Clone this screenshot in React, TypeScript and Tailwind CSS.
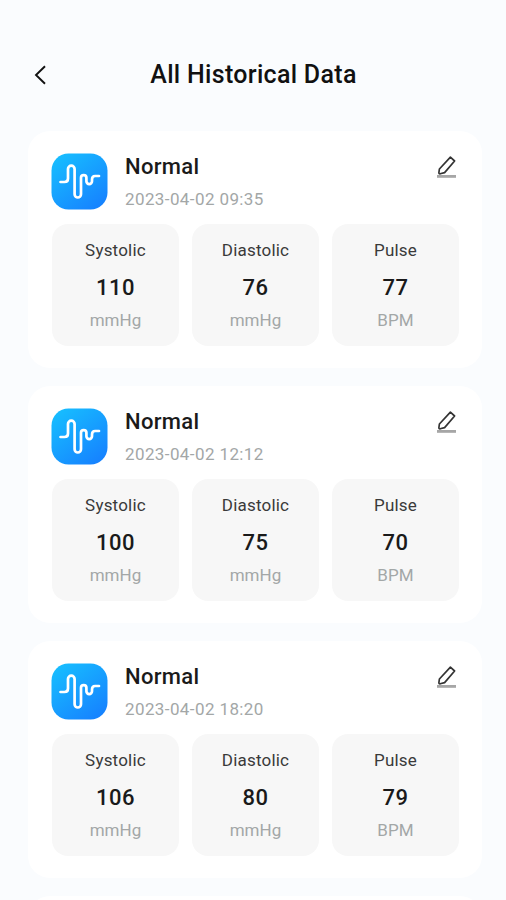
import React from 'react';

const records = [
  { id: 1, status: 'Normal', date: '2023-04-02 09:35', systolic: 110, diastolic: 76, pulse: 77 },
  { id: 2, status: 'Normal', date: '2023-04-02 12:12', systolic: 100, diastolic: 75, pulse: 70 },
  { id: 3, status: 'Normal', date: '2023-04-02 18:20', systolic: 106, diastolic: 80, pulse: 79 },
];

function WaveIcon() {
  return (
    <svg width="57" height="57" viewBox="0 0 57 57" fill="none" className="shrink-0">
      <defs>
        <linearGradient id="wave-bg" x1="8" y1="2" x2="50" y2="56" gradientUnits="userSpaceOnUse">
          <stop stopColor="#17bdff" />
          <stop offset="1" stopColor="#1680ff" />
        </linearGradient>
      </defs>
      <rect x="0.5" y="0.5" width="56" height="56" rx="17" fill="url(#wave-bg)" />
      <path
        d="M9.5 29H13.5Q17 29 17 25.5V16a3.3 3.3 0 0 1 6.6 0V41.3a3.2 3.2 0 0 0 6.4 0V24.8a2.7 2.7 0 0 1 5.4 0V28.3a2.8 2.8 0 0 0 5.6 0V26.5Q41 23 44.1 23H48"
        stroke="#fff"
        strokeWidth="2.7"
        strokeLinecap="round"
        strokeLinejoin="round"
      />
    </svg>
  );
}

function EditIcon() {
  return (
    <svg width="21" height="24" viewBox="0 0 21 24" fill="none">
      <path d="M1 22.4H20" stroke="#a6a6a6" strokeWidth="2.8" />
      <path
        d="M14.4 3.2L18.6 7L8.6 18.6L4.2 19.8Q2.8 20 2.9 18.6L3.4 15Z"
        stroke="#333"
        strokeWidth="1.7"
        strokeLinejoin="round"
      />
    </svg>
  );
}

function Reading({ label, value, unit }: { label: string; value: number; unit: string }) {
  return (
    <div className="flex h-[122px] flex-1 flex-col items-center rounded-[16px] bg-[#f7f7f7] pt-[15px]">
      <div className="text-[17px] leading-[22px] tracking-[0.2px] text-[#3a3a3a]">{label}</div>
      <div className="mt-[12px] text-[22px] leading-[30px] font-medium tracking-[0.5px] text-[#1a1a1a]">{value}</div>
      <div className="mt-[6px] text-[17px] leading-[22px] tracking-[0.05px] text-[#a3a7a7]">{unit}</div>
    </div>
  );
}

export default function App() {
  return (
    <div className="h-[900px] w-[506px] overflow-hidden bg-[#fafcfe] font-[Roboto,sans-serif]">
      {/* Header */}
      <header className="grid h-[131px] grid-cols-[60px_1fr_60px] items-start pt-[60px]">
        <button className="flex h-[30px] items-center pl-[34px]">
          <svg width="13" height="20" viewBox="0 0 13 20" fill="none">
            <path d="M11 1.2L2 10L11 18.8" stroke="#111" strokeWidth="1.9" />
          </svg>
        </button>
        <h1 className="pl-px text-center text-[25px] leading-[30px] font-medium tracking-[0.3px] text-[#111]">
          All Historical Data
        </h1>
      </header>

      {/* Records */}
      <main className="flex flex-col gap-[18px] px-[28px]">
        {records.map((record) => (
          <section key={record.id} className="h-[237px] w-[454px] shrink-0 rounded-[22px] bg-white px-[23px] pt-[22px]">
            <div className="flex h-[71px]">
              <WaveIcon />
              <div className="ml-[17px] flex-1">
                <h2 className="text-[22px] leading-[28px] font-medium tracking-[0.3px] text-[#1a1a1a]">{record.status}</h2>
                <p className="mt-[7px] text-[17px] leading-[22px] tracking-[0.4px] text-[#a3a7a7]">{record.date}</p>
              </div>
              <button className="mt-px mr-[2px] h-6">
                <EditIcon />
              </button>
            </div>
            <div className="flex gap-[13px] pl-px">
              <Reading label="Systolic" value={record.systolic} unit="mmHg" />
              <Reading label="Diastolic" value={record.diastolic} unit="mmHg" />
              <Reading label="Pulse" value={record.pulse} unit="BPM" />
            </div>
          </section>
        ))}
        <section className="h-[237px] w-[454px] shrink-0 rounded-[22px] bg-white" />
      </main>
    </div>
  );
}
